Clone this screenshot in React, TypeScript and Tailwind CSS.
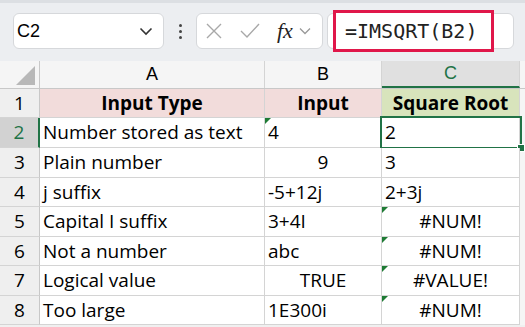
import React from "react";

const rows = [
  { n: "1", h: "h-[29px]", a: "Input Type", b: "Input", c: "Square Root", head: true },
  { n: "2", h: "h-[30px]", a: "Number stored as text", b: "4", bAlign: "left", bFlag: true, c: "2", sel: true },
  { n: "3", h: "h-[30px]", a: "Plain number", b: "9", bAlign: "center", c: "3" },
  { n: "4", h: "h-[29px]", a: "j suffix", b: "-5+12j", c: "2+3j" },
  { n: "5", h: "h-[30px]", a: "Capital I suffix", b: "3+4I", c: "#NUM!", cErr: true },
  { n: "6", h: "h-[29px]", a: "Not a number", b: "abc", c: "#NUM!", cErr: true },
  { n: "7", h: "h-[30px]", a: "Logical value", b: "TRUE", bAlign: "center", c: "#VALUE!", cErr: true },
  { n: "8", h: "h-[29px]", a: "Too large", b: "1E300i", c: "#NUM!", cErr: true },
];

const Flag = () => (
  <div className="absolute top-0 left-0 w-0 h-0 border-t-[6px] border-r-[6px] border-t-[#1e7b34] border-r-transparent" />
);

const App = () => {
  return (
    <div className="w-[525px] h-[327px] overflow-hidden bg-[#f0f0f0] font-['Open_Sans',sans-serif] text-black">
      {/* toolbar */}
      <div className="h-[61px] bg-[#eceef1] border-t-[3px] border-[#dcdfe3] flex items-start pt-[10px] relative">
        <div className="ml-[13px] w-[151px] h-[36px] bg-white rounded-[6px] border border-[#d6d8db] flex items-center justify-between pl-[3px] pr-[10px]">
          <span className="text-[18px] font-['Liberation_Sans',sans-serif]">C2</span>
          <svg width="14" height="9" viewBox="0 0 14 9" fill="none" stroke="#333" strokeWidth="1.6">
            <path d="M1.5 1.5 L7 7 L12.5 1.5" />
          </svg>
        </div>
        <div className="w-[32px] h-[36px] flex flex-col items-center justify-center gap-[3px]">
          <div className="w-[3px] h-[3px] rounded-full bg-[#444]" />
          <div className="w-[3px] h-[3px] rounded-full bg-[#444]" />
          <div className="w-[3px] h-[3px] rounded-full bg-[#444]" />
        </div>
        <div className="w-[127px] h-[36px] bg-white rounded-[6px] border border-[#d6d8db] flex items-center pl-[9px]">
          <svg width="16" height="16" viewBox="0 0 16 16" stroke="#a8a8a8" strokeWidth="1.4" fill="none">
            <path d="M1 1 L15 15 M15 1 L1 15" />
          </svg>
          <svg className="ml-[18px]" width="20" height="16" viewBox="0 0 20 16" stroke="#a8a8a8" strokeWidth="1.4" fill="none">
            <path d="M1 8 L7 14 L19 1" />
          </svg>
          <span className="ml-[17px] text-[22px] italic font-['Liberation_Serif',serif] text-[#222] leading-none">fx</span>
          <svg className="ml-[6px]" width="12" height="8" viewBox="0 0 12 8" fill="none" stroke="#999" strokeWidth="1.3">
            <path d="M1 1.5 L6 6.5 L11 1.5" />
          </svg>
        </div>
        <div className="ml-[4px] w-[187px] h-[36px] bg-white rounded-[6px] border border-[#d6d8db]" />
        <div className="absolute left-[333px] top-[7px] w-[161px] h-[42px] border-[3px] border-[#e0174a] bg-white flex items-center pl-[9px]">
          <span className="text-[20px] font-['DejaVu_Sans_Mono',monospace] text-[#222]">=IMSQRT(B2)</span>
        </div>
      </div>

      {/* column headers */}
      <div className="flex h-[28px] bg-[#f5f5f5] border-b border-[#c8c8c8]">
        <div className="w-[40px] border-r border-[#c8c8c8] relative">
          <div className="absolute left-[16px] top-[5px] w-0 h-0 border-l-[19px] border-b-[19px] border-l-transparent border-b-[#b8b8b8]" />
        </div>
        <div className="w-[225px] border-r border-[#d4d4d4] flex items-center justify-center text-[18px] font-['Liberation_Sans',sans-serif]">A</div>
        <div className="w-[117px] border-r border-[#d4d4d4] flex items-center justify-center text-[18px] font-['Liberation_Sans',sans-serif]">B</div>
        <div className="w-[138px] bg-[#e0e0e0] border-r border-[#d4d4d4] border-b-2 border-b-[#217346] flex items-center justify-center text-[18px] text-[#217346] font-['Liberation_Sans',sans-serif]">C</div>
        <div className="flex-1" />
      </div>

      {/* rows */}
      {rows.map((r) => (
        <div key={r.n} className={`flex ${r.h} text-[19px]`}>
          <div
            className={`w-[40px] border-b border-[#d4d4d4] flex items-center justify-center ${
              r.sel ? "bg-[#d2d2d2] text-[#217346] border-r-2 border-r-[#217346]" : "bg-[#efefef] border-r border-r-[#c8c8c8]"
            }`}
          >
            {r.n}
          </div>
          <div
            className={`w-[225px] border-r border-b border-[#d4d4d4] flex items-center px-[3px] ${
              r.head ? "bg-[#f2dcdb] justify-center font-bold" : "bg-white"
            }`}
          >
            {r.a}
          </div>
          <div
            className={`relative w-[117px] border-r border-b border-[#d4d4d4] flex items-center px-[3px] ${
              r.head ? "bg-[#f2dcdb] justify-center font-bold" : r.bAlign === "center" ? "bg-white justify-center" : "bg-white"
            }`}
          >
            {r.bFlag && <Flag />}
            {r.b}
          </div>
          <div
            className={`relative w-[138px] border-r border-b border-[#d4d4d4] flex items-center px-[3px] ${
              r.head ? "bg-[#d8e4bc] justify-center font-bold" : r.cErr ? "bg-white justify-center" : "bg-white"
            }`}
          >
            {r.cErr && <Flag />}
            {r.c}
            {r.sel && (
              <div className="absolute -left-[2px] -top-[2px] w-[142px] h-[33px] border-2 border-[#217346]">
                <div className="absolute -right-[5px] -bottom-[5px] w-[8px] h-[8px] bg-[#217346] border border-white" />
              </div>
            )}
          </div>
          <div className="flex-1 bg-[#f5f5f5]" />
        </div>
      ))}
    </div>
  );
};

export default App;
